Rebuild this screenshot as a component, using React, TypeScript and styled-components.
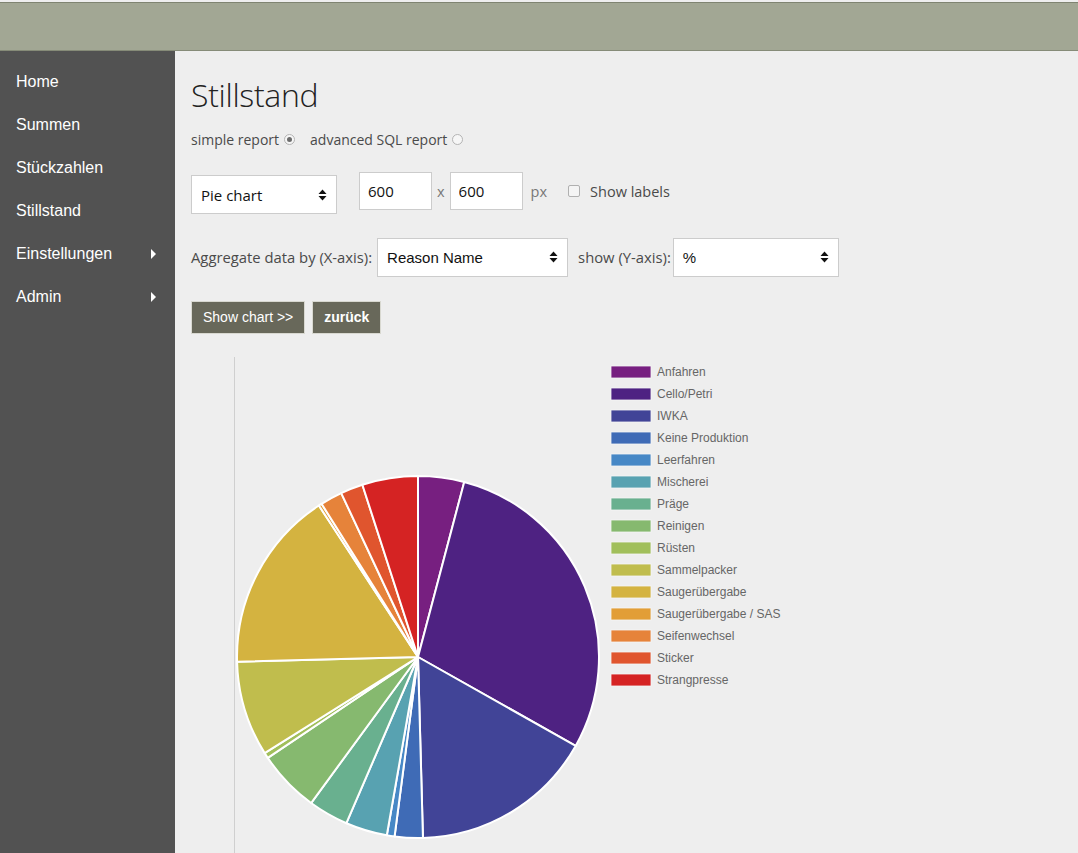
import React from "react";
import styled, { createGlobalStyle } from "styled-components";

const GlobalStyle = createGlobalStyle`
  html, body {
    margin: 0;
    padding: 0;
    height: 100%;
    overflow: hidden;
    background: #eeeeee;
  }
  #root {
    height: 100%;
  }
`;

const slices = [
  { name: "Anfahren", color: "#771f80", value: 4.11 },
  { name: "Cello/Petri", color: "#4e2282", value: 29.06 },
  { name: "IWKA", color: "#414497", value: 16.39 },
  { name: "Keine Produktion", color: "#3f6bb6", value: 2.5 },
  { name: "Leerfahren", color: "#4788c6", value: 0.69 },
  { name: "Mischerei", color: "#58a2b1", value: 3.72 },
  { name: "Präge", color: "#69b08f", value: 3.58 },
  { name: "Reinigen", color: "#86b96f", value: 5.53 },
  { name: "Rüsten", color: "#a1bf5b", value: 0.5 },
  { name: "Sammelpacker", color: "#c0bd4d", value: 8.5 },
  { name: "Saugerübergabe", color: "#d4b340", value: 16.19 },
  { name: "Saugerübergabe / SAS", color: "#e29e37", value: 0.28 },
  { name: "Seifenwechsel", color: "#e6833a", value: 1.97 },
  { name: "Sticker", color: "#e0552e", value: 2.0 },
  { name: "Strangpresse", color: "#d52323", value: 4.97 },
];

const menu = [
  { label: "Home" },
  { label: "Summen" },
  { label: "Stückzahlen" },
  { label: "Stillstand" },
  { label: "Einstellungen", sub: true },
  { label: "Admin", sub: true },
];

const Page = styled.div`
  display: flex;
  flex-direction: column;
  height: 100%;
`;

const Header = styled.header`
  flex: none;
  height: 47px;
  margin-top: 2px;
  background: #a2a794;
  border-top: 1px solid #7f8471;
  border-bottom: 1px solid #868b78;
`;

const Body = styled.div`
  flex: 1;
  display: flex;
  min-height: 0;
`;

const Sidebar = styled.nav`
  flex: none;
  width: 175px;
  background: #525252;
  padding-top: 9px;
  box-sizing: border-box;
`;

const MenuItem = styled.div`
  display: flex;
  align-items: center;
  justify-content: space-between;
  height: 43px;
  padding: 0 19px 0 16px;
  color: #ffffff;
  font-family: "Liberation Sans", Arial, sans-serif;
  font-size: 16px;
`;

const Caret = styled.span`
  width: 0;
  height: 0;
  border-top: 5px solid transparent;
  border-bottom: 5px solid transparent;
  border-left: 5px solid #ffffff;
`;

const Main = styled.main`
  flex: 1;
  padding: 0 16px;
  font-family: "Open Sans", "Noto Sans", sans-serif;
  color: #333333;
  min-width: 0;
`;

const Title = styled.h1`
  margin: 22px 0 0 0;
  font-size: 32px;
  font-weight: 300;
  line-height: 44px;
  color: #222222;
  letter-spacing: -0.3px;
`;

const RadioRow = styled.div`
  display: flex;
  align-items: center;
  margin-top: 11px;
  height: 22px;
  font-size: 14px;
  color: #4a4a4a;
`;

const RadioLabel = styled.label`
  display: flex;
  align-items: center;
  gap: 5px;
  margin-right: 15px;
`;

const Radio = styled.span<{ $checked?: boolean }>`
  width: 11px;
  height: 11px;
  border-radius: 50%;
  border: 1px solid #b4b4b4;
  background: #f6f6f6;
  position: relative;
  box-sizing: border-box;
  &::after {
    content: "";
    display: ${(p) => (p.$checked ? "block" : "none")};
    position: absolute;
    left: 2px;
    top: 2px;
    width: 5px;
    height: 5px;
    border-radius: 50%;
    background: #6c6c6c;
  }
`;

const FormRow = styled.div<{ $top: number; $size: number }>`
  display: flex;
  align-items: center;
  margin-top: ${(p) => p.$top}px;
  font-size: ${(p) => p.$size}px;
  color: #4a4a4a;
`;

const SelectBox = styled.div<{ $width: number; $arial?: boolean; $drop?: number }>`
  display: flex;
  align-items: center;
  justify-content: space-between;
  box-sizing: border-box;
  width: ${(p) => p.$width}px;
  height: 39px;
  margin-top: ${(p) => p.$drop ?? 0}px;
  margin-bottom: ${(p) => -(p.$drop ?? 0)}px;
  padding: 0 9px;
  background: #ffffff;
  border: 1px solid #cccccc;
  color: #111111;
  font-size: 15px;
  font-family: ${(p) =>
    p.$arial ? '"Liberation Sans", Arial, sans-serif' : '"Open Sans", sans-serif'};
`;

const SizeInput = styled.input`
  box-sizing: border-box;
  width: 73px;
  height: 38px;
  padding: 0 8px;
  border: 1px solid #cccccc;
  background: #ffffff;
  font-family: "Open Sans", sans-serif;
  font-size: 15px;
  color: #111111;
  outline: none;
`;

const Text = styled.span<{ $ml?: number; $mr?: number; $color?: string }>`
  margin-left: ${(p) => p.$ml ?? 0}px;
  margin-right: ${(p) => p.$mr ?? 0}px;
  color: ${(p) => p.$color ?? "#4a4a4a"};
`;

const Checkbox = styled.span`
  width: 12px;
  height: 12px;
  box-sizing: border-box;
  border: 1px solid #b0b0b0;
  border-radius: 2px;
  background: #f4f4f4;
  margin-left: 21px;
  margin-right: 10px;
`;

const Buttons = styled.div`
  display: flex;
  gap: 7px;
  margin-top: 24px;
`;

const Button = styled.button<{ $bold?: boolean }>`
  height: 33px;
  padding: 0 11px;
  background: #68685a;
  color: #ffffff;
  border: 1px solid #d8d8d0;
  font-family: "Liberation Sans", Arial, sans-serif;
  font-size: 14px;
  font-weight: ${(p) => (p.$bold ? 700 : 400)};
  cursor: pointer;
`;

const ChartArea = styled.div`
  margin-top: 23px;
  margin-left: 43px;
  border-left: 1px solid #cfcfcf;
  height: 600px;
`;

function SelectArrows() {
  return (
    <svg width="9" height="12" viewBox="0 0 9 12">
      <path d="M4.5 0.5 L8.5 5 L0.5 5 Z" fill="#111" />
      <path d="M0.5 7 L8.5 7 L4.5 11.5 Z" fill="#111" />
    </svg>
  );
}

function PieChart() {
  const cx = 183;
  const cy = 300;
  const r = 181;
  const total = slices.reduce((s, d) => s + d.value, 0);
  let acc = 0;
  const point = (a: number) => {
    const rad = (a * Math.PI) / 180;
    return [cx + r * Math.sin(rad), cy - r * Math.cos(rad)];
  };
  return (
    <svg width="620" height="600" viewBox="0 0 620 600">
      {slices.map((d) => {
        const a0 = (acc / total) * 360;
        acc += d.value;
        const a1 = (acc / total) * 360;
        const [x0, y0] = point(a0);
        const [x1, y1] = point(a1);
        const large = a1 - a0 > 180 ? 1 : 0;
        return (
          <path
            key={d.name}
            d={`M${cx} ${cy} L${x0} ${y0} A${r} ${r} 0 ${large} 1 ${x1} ${y1} Z`}
            fill={d.color}
            stroke="#ffffff"
            strokeWidth={2}
            strokeLinejoin="round"
          />
        );
      })}
      {slices.map((d, i) => (
        <g key={d.name} transform={`translate(376 ${9 + i * 22})`}>
          <rect x="0" y="0" width="40" height="12" fill={d.color} stroke="#f4f4f4" strokeWidth={0.8} />
          <text
            x="46"
            y="10"
            fontFamily="'Liberation Sans', Arial, sans-serif"
            fontSize="12"
            fill="#666666"
          >
            {d.name}
          </text>
        </g>
      ))}
    </svg>
  );
}

export default function App() {
  return (
    <Page>
      <GlobalStyle />
      <Header />
      <Body>
        <Sidebar>
          {menu.map((m) => (
            <MenuItem key={m.label}>
              <span>{m.label}</span>
              {m.sub && <Caret />}
            </MenuItem>
          ))}
        </Sidebar>
        <Main>
          <Title>Stillstand</Title>
          <RadioRow>
            <RadioLabel>
              simple report <Radio $checked />
            </RadioLabel>
            <RadioLabel>
              advanced SQL report <Radio />
            </RadioLabel>
          </RadioRow>
          <FormRow $top={21.5} $size={14.5}>
            <SelectBox $width={146} $drop={3.5}>
              <span>Pie chart</span>
              <SelectArrows />
            </SelectBox>
            <SizeInput style={{ marginLeft: 22 }} defaultValue="600" readOnly />
            <Text $ml={5} $mr={5} $color="#777">x</Text>
            <SizeInput defaultValue="600" readOnly />
            <Text $ml={8} $color="#777">px</Text>
            <Checkbox />
            <Text>Show labels</Text>
          </FormRow>
          <FormRow $top={27} $size={14.8}>
            <Text $mr={5}>Aggregate data by (X-axis):</Text>
            <SelectBox $width={191} $arial>
              <span>Reason Name</span>
              <SelectArrows />
            </SelectBox>
            <Text $ml={10} $mr={2}>show (Y-axis):</Text>
            <SelectBox $width={166} $arial>
              <span>%</span>
              <SelectArrows />
            </SelectBox>
          </FormRow>
          <Buttons>
            <Button>Show chart &gt;&gt;</Button>
            <Button $bold>zurück</Button>
          </Buttons>
          <ChartArea>
            <PieChart />
          </ChartArea>
        </Main>
      </Body>
    </Page>
  );
}
